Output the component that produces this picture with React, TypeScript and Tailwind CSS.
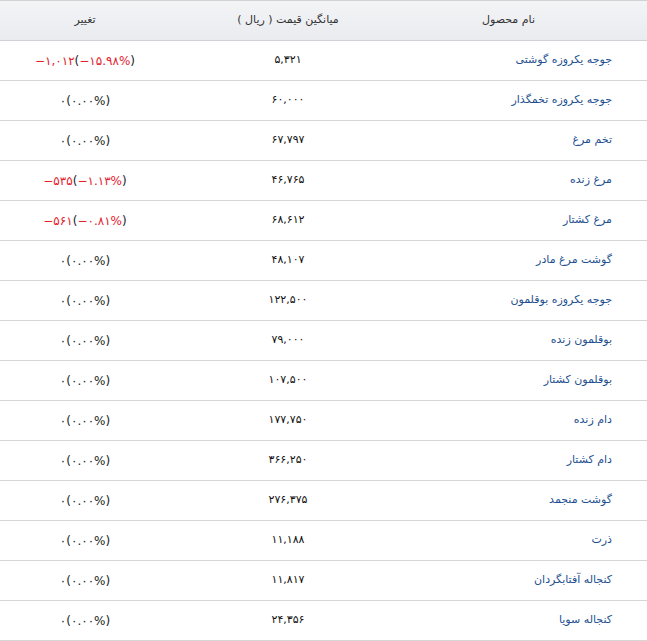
import React from "react";

type Row = { name: string; price: string; diff: string; pct: string; neg: boolean };

const rows: Row[] = [
  { name: "جوجه یکروزه گوشتی", price: "۵,۳۲۱", diff: "−۱,۰۱۲", pct: "−۱۵.۹۸%", neg: true },
  { name: "جوجه یکروزه تخمگذار", price: "۶۰,۰۰۰", diff: "۰", pct: "۰.۰۰%", neg: false },
  { name: "تخم مرغ", price: "۶۷,۷۹۷", diff: "۰", pct: "۰.۰۰%", neg: false },
  { name: "مرغ زنده", price: "۴۶,۷۶۵", diff: "−۵۳۵", pct: "−۱.۱۳%", neg: true },
  { name: "مرغ کشتار", price: "۶۸,۶۱۲", diff: "−۵۶۱", pct: "−۰.۸۱%", neg: true },
  { name: "گوشت مرغ مادر", price: "۴۸,۱۰۷", diff: "۰", pct: "۰.۰۰%", neg: false },
  { name: "جوجه یکروزه بوقلمون", price: "۱۲۲,۵۰۰", diff: "۰", pct: "۰.۰۰%", neg: false },
  { name: "بوقلمون زنده", price: "۷۹,۰۰۰", diff: "۰", pct: "۰.۰۰%", neg: false },
  { name: "بوقلمون کشتار", price: "۱۰۷,۵۰۰", diff: "۰", pct: "۰.۰۰%", neg: false },
  { name: "دام زنده", price: "۱۷۷,۷۵۰", diff: "۰", pct: "۰.۰۰%", neg: false },
  { name: "دام کشتار", price: "۳۶۶,۲۵۰", diff: "۰", pct: "۰.۰۰%", neg: false },
  { name: "گوشت منجمد", price: "۲۷۶,۳۷۵", diff: "۰", pct: "۰.۰۰%", neg: false },
  { name: "ذرت", price: "۱۱,۱۸۸", diff: "۰", pct: "۰.۰۰%", neg: false },
  { name: "کنجاله آفتابگردان", price: "۱۱,۸۱۷", diff: "۰", pct: "۰.۰۰%", neg: false },
  { name: "کنجاله سویا", price: "۲۴,۳۵۶", diff: "۰", pct: "۰.۰۰%", neg: false },
];

export default function App() {
  return (
    <div
      className="w-[647px] bg-white text-[11px] text-[#222]"
      style={{ fontFamily: '"DejaVu Sans", Tahoma, sans-serif' }}
    >
      <div className="grid h-[41px] grid-cols-[206px_164px_277px] items-center border-y border-[#cfd2d6] bg-gradient-to-b from-[#f3f4f6] to-[#e9ebef] text-[#333]">
        <div className="pr-[36px] text-center" dir="rtl">تغییر</div>
        <div className="text-center" dir="rtl">میانگین قیمت ( ریال )</div>
        <div className="text-center" dir="rtl">نام محصول</div>
      </div>
      {rows.map((r, i) => (
        <div
          key={i}
          className="grid h-[40px] grid-cols-[206px_164px_277px] items-center border-b border-[#d6d6d6]"
        >
          <div className="pr-[36px] text-center text-[12px]" dir="ltr">
            <span dir="ltr" className={r.neg ? "text-[#e3212d]" : "text-[#222]"}>{r.diff}</span>
            <span dir="ltr" className="text-[#222]">(</span>
            <span dir="ltr" className={r.neg ? "text-[#e3212d]" : "text-[#222]"}>{r.pct}</span>
            <span dir="ltr" className="text-[#222]">)</span>
          </div>
          <div className="text-center text-[#111]" dir="ltr">{r.price}</div>
          <div className="pr-[35px] text-right text-[#1e4f8f]" dir="rtl">
            {r.name}
          </div>
        </div>
      ))}
    </div>
  );
}
